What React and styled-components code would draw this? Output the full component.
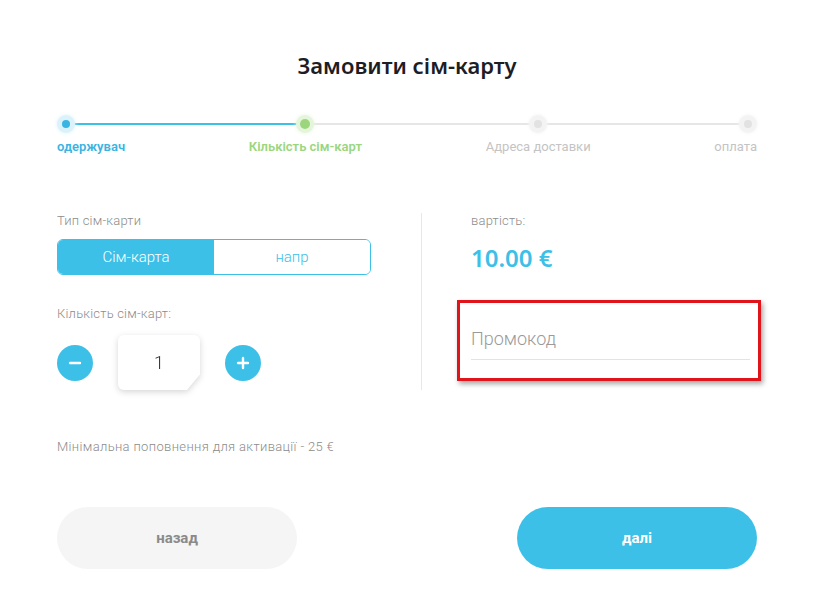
import React, { useState } from 'react';
import styled, { createGlobalStyle } from 'styled-components';

const GlobalStyle = createGlobalStyle`
  html, body {
    margin: 0;
    padding: 0;
    background: #fff;
    font-family: Roboto, "Liberation Sans", sans-serif;
  }
  * {
    box-sizing: border-box;
  }
`;

const BLUE = '#3cc0e8';
const GREEN = '#9bd67f';

const Page = styled.div`
  width: 700px;
  margin: 0 auto;
  padding-top: 50px;
`;

const Title = styled.h1`
  margin: 0;
  text-align: center;
  color: #1d1d26;
  font-family: "Noto Sans", Roboto, sans-serif;
  font-size: 22px;
  font-weight: 600;
  line-height: 30px;
`;

const Stepper = styled.div`
  position: relative;
  display: flex;
  justify-content: space-between;
  margin-top: 35px;
`;

const Track = styled.div`
  position: absolute;
  top: 8px;
  left: 9px;
  right: 9px;
  height: 2px;
  background: #e6e6e6;
`;

const TrackFill = styled.div`
  height: 100%;
  background: ${BLUE};
`;

const Step = styled.div`
  position: relative;
  display: flex;
  flex-direction: column;
  align-items: ${(p) => p.$align};
`;

const Dot = styled.div`
  width: 18px;
  height: 18px;
  border-radius: 50%;
  display: flex;
  align-items: center;
  justify-content: center;
  background: ${(p) => p.$halo};
  box-shadow: 0 0 4px ${(p) => p.$halo};

  &::after {
    content: '';
    width: ${(p) => (p.$big ? 10 : 8)}px;
    height: ${(p) => (p.$big ? 10 : 8)}px;
    border-radius: 50%;
    background: ${(p) => p.$color};
  }
`;

const StepLabel = styled.div`
  margin-top: 6px;
  font-size: 13px;
  line-height: 16px;
  font-weight: ${(p) => (p.$muted ? 400 : 600)};
  color: ${(p) => p.$color};
  white-space: nowrap;
`;

const Columns = styled.div`
  display: grid;
  grid-template-columns: 365px 1fr;
  margin-top: 58px;
`;

const LeftCol = styled.div`
  border-right: 1px solid #e8e8e8;
`;

const RightCol = styled.div`
  padding-left: 35px;
  margin-right: -4px;
`;

const FieldLabel = styled.div`
  font-size: 13px;
  line-height: 16px;
  font-weight: 300;
  letter-spacing: 0.2px;
  color: #8c8c8c;
  margin-top: ${(p) => p.$top || 0}px;
`;

const Toggle = styled.div`
  display: flex;
  width: 314px;
  height: 36px;
  margin-top: 10px;
  border: 1px solid ${BLUE};
  border-radius: 6px;
  overflow: hidden;
`;

const ToggleOption = styled.button`
  flex: 1;
  border: none;
  margin: 0;
  padding: 0;
  cursor: pointer;
  font-family: inherit;
  font-size: 15px;
  font-weight: 300;
  background: ${(p) => (p.$active ? BLUE : '#fff')};
  color: ${(p) => (p.$active ? '#fff' : BLUE)};
`;

const Counter = styled.div`
  display: flex;
  align-items: center;
  gap: 25px;
  margin-top: 13px;
`;

const RoundBtn = styled.button`
  width: 36px;
  height: 36px;
  border-radius: 50%;
  border: none;
  padding: 0;
  background: ${BLUE};
  display: flex;
  align-items: center;
  justify-content: center;
  cursor: pointer;
`;

const QtyShadow = styled.div`
  filter: drop-shadow(0 2px 3px rgba(0, 0, 0, 0.16));
`;

const QtyBox = styled.div`
  width: 82px;
  height: 55px;
  background: #fff;
  border-radius: 6px;
  clip-path: polygon(0 0, 100% 0, 100% 72%, 84% 100%, 0 100%);
  display: flex;
  align-items: center;
  justify-content: center;
  font-size: 18px;
  font-weight: 300;
  color: #333;
`;

const Price = styled.div`
  margin-top: 14px;
  font-family: "Noto Sans", Roboto, sans-serif;
  font-size: 24px;
  line-height: 30px;
  font-weight: 600;
  color: ${BLUE};
`;

const Info = styled.div`
  padding-left: 14px;
`;

const PromoBox = styled.div`
  margin-top: 27px;
  border: 3px solid #e1141b;
  box-shadow: 2px 3px 5px rgba(0, 0, 0, 0.35);
  padding: 24px 8px 18px 11px;
`;

const PromoInput = styled.input`
  display: block;
  width: 100%;
  border: none;
  border-bottom: 1px solid #e3e3e3;
  outline: none;
  padding: 0 0 8px;
  font-family: inherit;
  font-size: 18px;
  line-height: 24px;
  font-weight: 300;
  color: #333;

  &::placeholder {
    color: #9a9a9a;
  }
`;

const Note = styled.div`
  margin-top: 49px;
  font-size: 13px;
  line-height: 16px;
  font-weight: 300;
  letter-spacing: 0.35px;
  color: #8c8c8c;
`;

const Actions = styled.div`
  display: flex;
  justify-content: space-between;
  margin-top: 52px;
`;

const NavBtn = styled.button`
  width: 240px;
  height: 62px;
  border: none;
  border-radius: 31px;
  cursor: pointer;
  font-family: inherit;
  font-size: 15px;
  font-weight: 700;
  background: ${(p) => (p.$primary ? BLUE : '#f5f5f5')};
  color: ${(p) => (p.$primary ? '#fff' : '#8a8a8a')};
`;

const steps = [
  { label: 'одержувач', align: 'flex-start', color: '#3ab4e2', dot: '#3ab4e2', halo: '#dcf2fb' },
  { label: 'Кількість сім-карт', align: 'center', color: GREEN, dot: GREEN, halo: '#e5f5dc', big: true },
  { label: 'Адреса доставки', align: 'center', color: '#c4c4c4', dot: '#e2e2e2', halo: '#f3f3f3', muted: true },
  { label: 'оплата', align: 'flex-end', color: '#c4c4c4', dot: '#e2e2e2', halo: '#f3f3f3', muted: true },
];

function Minus() {
  return (
    <svg width="14" height="14" viewBox="0 0 14 14">
      <path d="M2 7h10" stroke="#fff" strokeWidth="2.4" strokeLinecap="round" />
    </svg>
  );
}

function Plus() {
  return (
    <svg width="14" height="14" viewBox="0 0 14 14">
      <path d="M2 7h10M7 2v10" stroke="#fff" strokeWidth="2.4" strokeLinecap="round" />
    </svg>
  );
}

export default function App() {
  const [type, setType] = useState('sim');
  const [qty, setQty] = useState(1);

  return (
    <>
      <GlobalStyle />
      <Page>
        <Title>Замовити сім-карту</Title>

        <Stepper>
          <Track>
            <TrackFill style={{ width: '241px' }} />
          </Track>
          {steps.map((s) => (
            <Step key={s.label} $align={s.align}>
              <Dot $color={s.dot} $halo={s.halo} $big={s.big} />
              <StepLabel $color={s.color} $muted={s.muted}>
                {s.label}
              </StepLabel>
            </Step>
          ))}
        </Stepper>

        <Columns>
          <LeftCol>
            <FieldLabel>Тип сім-карти</FieldLabel>
            <Toggle>
              <ToggleOption $active={type === 'sim'} onClick={() => setType('sim')}>
                Сім-карта
              </ToggleOption>
              <ToggleOption $active={type === 'napr'} onClick={() => setType('napr')}>
                напр
              </ToggleOption>
            </Toggle>

            <FieldLabel $top={31}>Кількість сім-карт:</FieldLabel>
            <Counter>
              <RoundBtn onClick={() => setQty(Math.max(1, qty - 1))}>
                <Minus />
              </RoundBtn>
              <QtyShadow>
                <QtyBox>{qty}</QtyBox>
              </QtyShadow>
              <RoundBtn onClick={() => setQty(qty + 1)}>
                <Plus />
              </RoundBtn>
            </Counter>
          </LeftCol>

          <RightCol>
            <Info>
              <FieldLabel>вартість:</FieldLabel>
              <Price>{(qty * 10).toFixed(2)} €</Price>
            </Info>
            <PromoBox>
              <PromoInput placeholder="Промокод" />
            </PromoBox>
          </RightCol>
        </Columns>

        <Note>Мінімальна поповнення для активації - 25 €</Note>

        <Actions>
          <NavBtn>назад</NavBtn>
          <NavBtn $primary>далі</NavBtn>
        </Actions>
      </Page>
    </>
  );
}
